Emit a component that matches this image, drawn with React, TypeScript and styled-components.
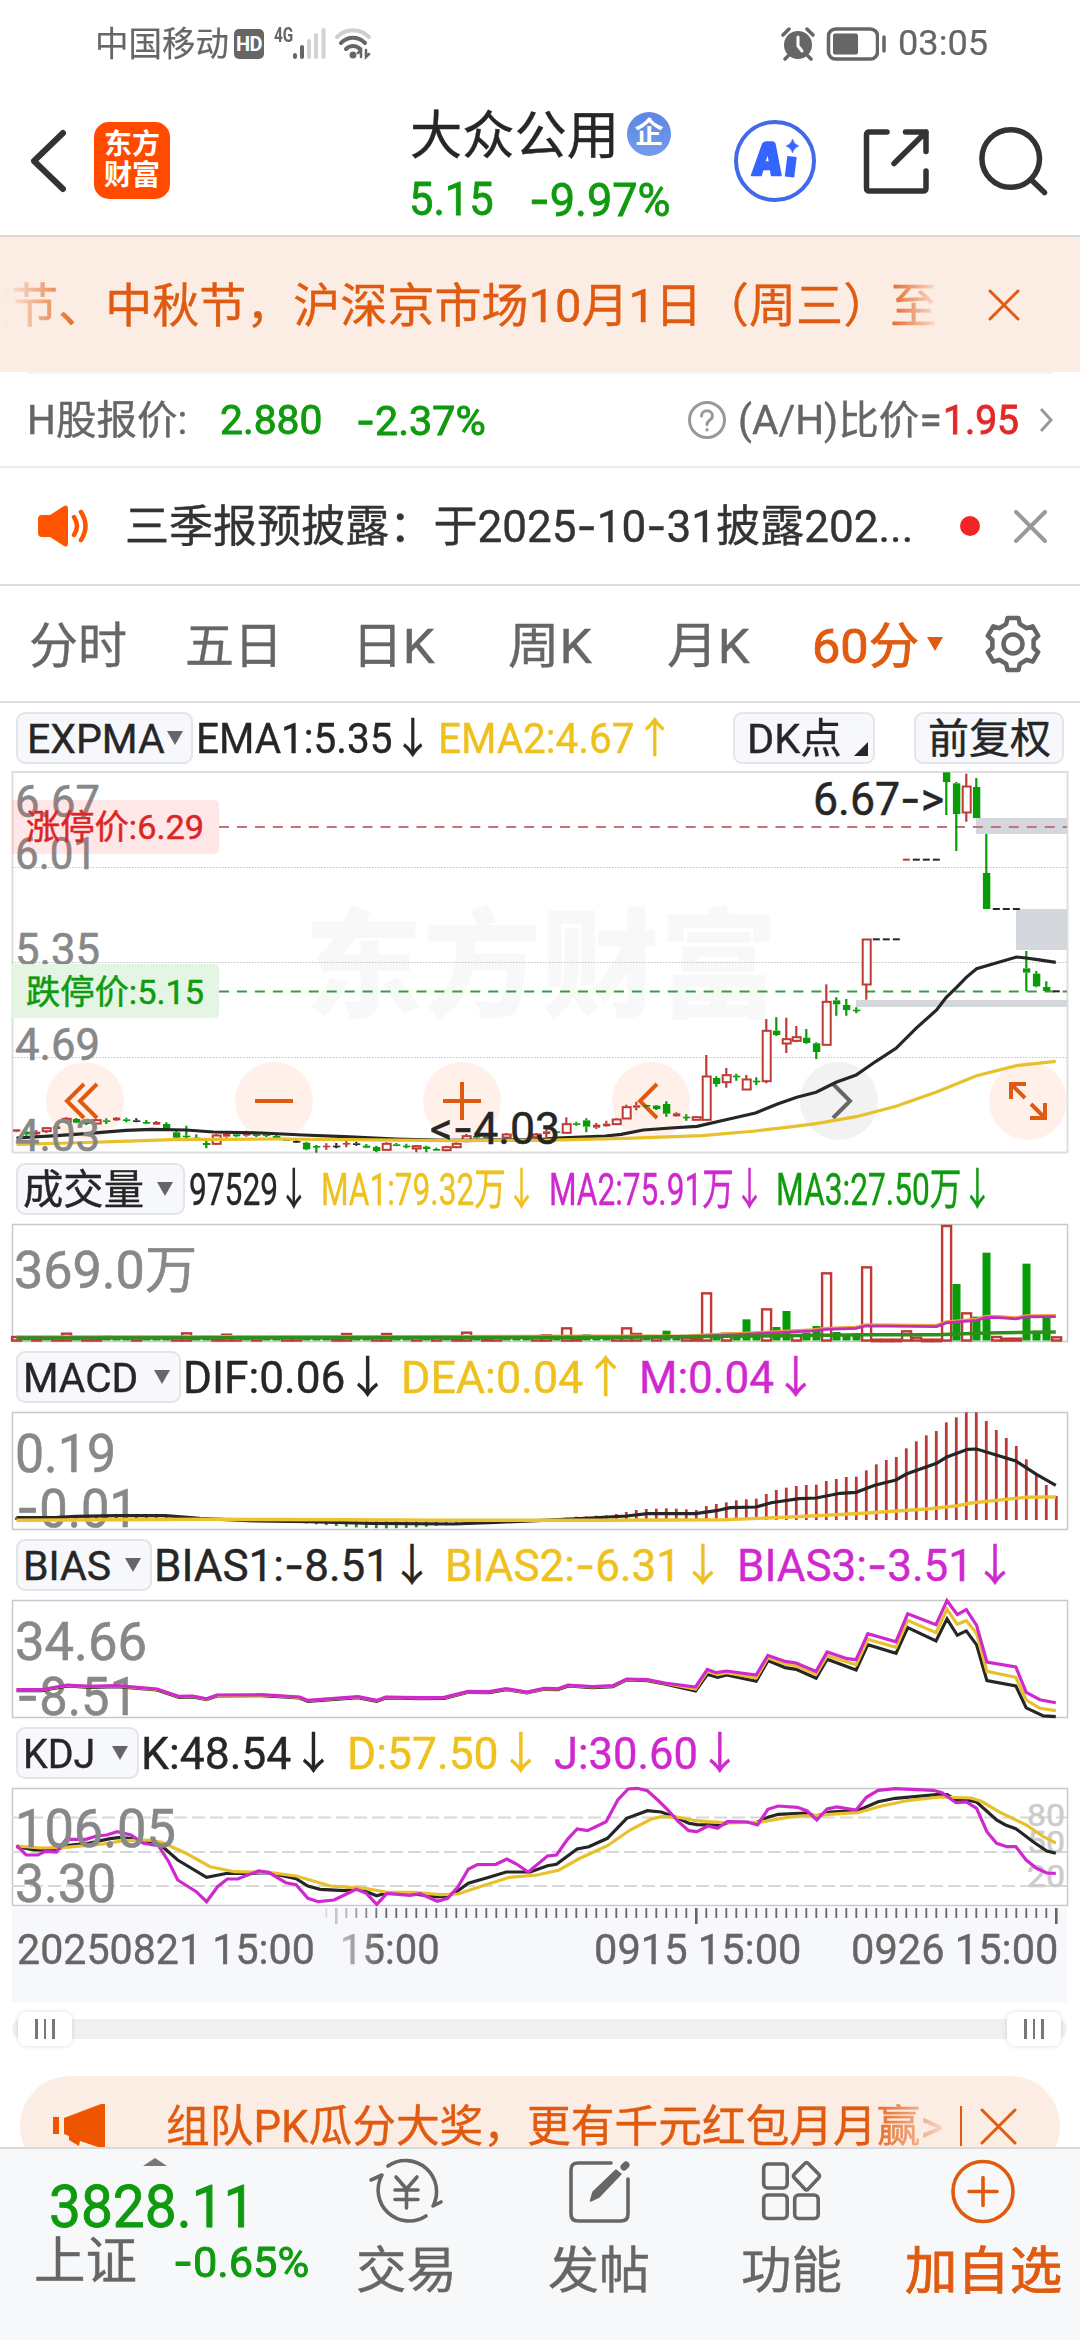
import React, { useLayoutEffect, useRef, useState } from "react";
import styled, { createGlobalStyle } from "styled-components";

const ORANGE = "#e05a10";
const GREEN = "#0f9a0f";
const RED = "#e02a2a";
const INK = "#262626";
const GREY = "#666666";
const YELLOW = "#efc11f";
const PINK = "#cf28cf";
const UP = "#c03a35";
const DOWN = "#089c08";

const Global = createGlobalStyle`
  * { box-sizing: border-box; }
  body { margin: 0; background: #fff; }
  svg { display: block; flex: none; }
`;

const Screen = styled.div`
  width: 1080px;
  height: 2340px;
  overflow: hidden;
  display: flex;
  flex-direction: column;
  background: #fff;
  color: ${INK};
  font-family: Roboto, "Noto Sans CJK SC", sans-serif;
`;

/* ---------- text that is fitted to a given advance width ---------- */

const FitBox = styled.span<{ $w: number; $ml: number; $size: number; $color?: string; $weight?: number; $dy: number; $ink: number }>`
  display: block;
  flex: none;
  width: ${(p) => p.$w}px;
  margin-left: ${(p) => p.$ml}px;
  margin-top: ${(p) => p.$dy}px;
  font-size: ${(p) => p.$size}px;
  line-height: ${(p) => Math.round(p.$size * 1.2)}px;
  font-weight: ${(p) => p.$weight ?? 400};
  -webkit-text-stroke: ${(p) => p.$ink}px currentColor;
  color: ${(p) => p.$color ?? "inherit"};
  white-space: nowrap;
`;
const FitInner = styled.span`
  display: inline-block;
  transform-origin: 0 50%;
`;
const Dash = styled.span`
  font-family: Inter, sans-serif;
`;

function dashed(text: string) {
  return text.split("-").map((part, i) => (
    <React.Fragment key={i}>
      {i > 0 && <Dash>-</Dash>}
      {part}
    </React.Fragment>
  ));
}

type FitProps = { w: number; ml?: number; size: number; color?: string; weight?: number; dy?: number; ink?: number; children: string };

function Fit({ w, ml = 0, size, color, weight, dy = 0, ink = 0.4, children }: FitProps) {
  const ref = useRef<HTMLSpanElement>(null);
  const [scale, setScale] = useState(1);
  useLayoutEffect(() => {
    if (ref.current) setScale(w / ref.current.offsetWidth);
  }, [w, children]);
  return (
    <FitBox $w={w} $ml={ml} $size={size} $color={color} $weight={weight} $dy={dy} $ink={ink}>
      <FitInner ref={ref} style={{ transform: `scaleX(${scale})` }}>
        {dashed(children)}
      </FitInner>
    </FitBox>
  );
}

/* ---------- status bar ---------- */

const StatusBar = styled.div`
  height: 86px;
  padding-top: 2px;
  flex: none;
  display: flex;
  align-items: center;
  color: ${GREY};
`;
const HdBadge = styled.span`
  width: 30px;
  height: 30px;
  margin-left: 5px;
  border-radius: 5px;
  background: ${GREY};
  color: #fff;
  font-size: 20px;
  font-weight: 700;
  line-height: 30px;
  text-align: center;
  letter-spacing: -0.5px;
`;
const Spacer = styled.div`
  flex: 1;
`;
const StatusEnd = styled.div`
  width: 92px;
`;

function Status() {
  return (
    <StatusBar>
      <Fit w={134} ml={95} size={34} ink={0.2}>中国移动</Fit>
      <HdBadge>HD</HdBadge>
      <Fit w={19} ml={10} size={21} weight={700} dy={-18} ink={0}>4G</Fit>
      <svg width="40" height="32" viewBox="0 0 40 32">
        <g strokeWidth="4" strokeLinecap="round">
          <path d="M2 27v2M9 19v10" stroke={GREY} />
          <path d="M16 13v16M23 7v22M30.500 2v27" stroke="#d2d2d2" />
        </g>
      </svg>
      <svg width="40" height="32" viewBox="0 0 40 32" fill="none" strokeLinecap="round">
        <path d="M4 9c9-9 23-9 32 0" stroke="#cfcfcf" strokeWidth="4" />
        <path d="M8 15c7-7 17-7 24 0" stroke={GREY} strokeWidth="4" />
        <path d="M13 21c4-4 10-4 14 0" stroke={GREY} strokeWidth="4" />
        <circle cx="20" cy="27" r="3.500" fill={GREY} />
        <path d="M28 29v-7l-3 3M33 22v7l3-3" stroke={GREY} strokeWidth="2.500" />
      </svg>
      <Spacer />
      <svg width="34" height="34" viewBox="0 0 34 34">
        <circle cx="17" cy="18" r="14" fill={GREY} />
        <path d="M2 8l6-6M32 8l-6-6M7 29l-3 3M27 29l3 3" stroke={GREY} strokeWidth="3.500" strokeLinecap="round" />
        <path d="M17 10v9l4 5" stroke="#fff" strokeWidth="3" fill="none" strokeLinecap="round" />
      </svg>
      <svg width="64" height="34" viewBox="0 0 64 34">
        <rect x="13.500" y="2" width="49" height="30" rx="7" fill="none" stroke={GREY} strokeWidth="3.500" />
        <rect x="18" y="6.500" width="25" height="21" rx="2" fill={GREY} />
      </svg>
      <svg width="8" height="34" viewBox="0 0 8 34">
        <path d="M5 10v14" stroke={GREY} strokeWidth="3.500" strokeLinecap="round" />
      </svg>
      <Fit w={90} ml={11} size={35} ink={0.2}>03:05</Fit>
      <StatusEnd />
    </StatusBar>
  );
}

/* ---------- title bar ---------- */

const TitleBar = styled.header`
  height: 151px;
  flex: none;
  display: flex;
  align-items: center;
  border-bottom: 2px solid #dcd8d6;
`;
const Logo = styled.div`
  width: 76px;
  height: 77px;
  margin-left: 28px;
  padding: 9px 0 6px;
  border-radius: 15px;
  background: #ff4a00;
  color: #fff;
  display: flex;
  flex-direction: column;
  justify-content: space-between;
`;
const Names = styled.div`
  width: 272px;
  height: 130px;
  margin-left: 239px;
  padding-top: 5px;
  display: flex;
  flex-direction: column;
  justify-content: space-between;
`;
const NameLine = styled.div`
  display: flex;
  align-items: center;
`;
const Corp = styled.span`
  width: 44px;
  height: 44px;
  margin-left: 8px;
  border-radius: 50%;
  background: linear-gradient(#5c86e2, #739cec);
  color: #fff;
  font-size: 29px;
  font-weight: 700;
  line-height: 42px;
  text-align: center;
`;
const TitleIcons = styled.div`
  display: flex;
  align-items: center;
  margin-left: 53px;
`;
const AiBadge = styled.div`
  width: 82px;
  height: 82px;
  border: 4.5px solid #4169e8;
  border-radius: 50%;
  display: flex;
  align-items: center;
  justify-content: center;
`;

function Title() {
  return (
    <TitleBar>
      <svg width="66" height="70" viewBox="0 0 66 70" fill="none" stroke="#333" strokeWidth="6" strokeLinecap="round" strokeLinejoin="round">
        <path d="M63 7L34 35l29 28" />
      </svg>
      <Logo>
        <Fit w={56} ml={10} size={28} weight={700} dy={-3} ink={0}>东方</Fit>
        <Fit w={56} ml={10} size={28} weight={700} dy={-3} ink={0}>财富</Fit>
      </Logo>
      <Names>
        <NameLine>
          <Fit w={209} ml={1} size={52} dy={5}>大众公用</Fit>
          <Corp>企</Corp>
        </NameLine>
        <NameLine>
          <Fit w={85} size={46} color={GREEN} ink={0.8} dy={4}>5.15</Fit>
          <Fit w={142} ml={35} size={46} color={GREEN} ink={0.8} dy={4}>-9.97%</Fit>
        </NameLine>
      </Names>
      <TitleIcons>
        <AiBadge>
          <svg width="52" height="44" viewBox="0 0 52 44" fill="none" stroke="#3565ff" strokeLinejoin="round">
            <path d="M2.500 36.500L13.500 5.500q1-2.500 3.500-2.500h6q2.500 0 3 2.500l6 31h-9.500l-1-6h-7.500l-2 6zM15.500 23h5l-1.500-9z" fill="#3565ff" fillRule="evenodd" strokeWidth="1.500" />
            <path d="M43 17.500L40.500 38" strokeWidth="9.500" />
            <path d="M43.500 0q1.500 5.500 6.500 7q-5 1.500-6.500 7q-1.500-5.500-6.500-7q5-1.500 6.500-7z" fill="#3565ff" strokeWidth="0.500" />
          </svg>
        </AiBadge>
        <svg width="158" height="80" viewBox="0 0 158 80" fill="none" stroke="#333" strokeWidth="5.500" strokeLinecap="round" strokeLinejoin="round">
          <path d="M71 11H53.500q-3 0-3 3v53q0 3 3 3H107q3 0 3-3V50M89.500 11H110v19.500M110 11L78 42.500" />
        </svg>
        <svg width="80" height="80" viewBox="0 0 80 80" fill="none" stroke="#333" strokeWidth="5.500" strokeLinecap="round">
          <circle cx="36.700" cy="37.500" r="28.800" />
          <path d="M57.500 59l13 12.500" />
        </svg>
      </TitleIcons>
    </TitleBar>
  );
}

/* ---------- notices ---------- */

const Banner = styled.div`
  height: 135px;
  flex: none;
  display: flex;
  align-items: center;
  background: #fcede4;
`;
const Marquee = styled.div`
  width: 938px;
  margin-right: 50px;
  overflow: hidden;
  display: flex;
  mask-image: linear-gradient(90deg, transparent 4px, #000 85px, #000 885px, transparent 942px);
`;
const HairLine = styled.div`
  height: 2px;
  flex: none;
  margin: 0 27px;
  background: #f9f3f1;
`;
const HRow = styled.div`
  height: 94px;
  flex: none;
  display: flex;
  align-items: center;
  color: ${GREY};
  border-bottom: 2px solid #ececec;
`;
const NoticeRow = styled.div`
  height: 118px;
  flex: none;
  display: flex;
  align-items: center;
  color: #333;
  border-bottom: 2px solid #dcdcdc;
`;
const RedDot = styled.span`
  width: 20px;
  height: 20px;
  margin: 0 34px 0 47px;
  border-radius: 50%;
  background: #f52424;
`;

function Cross({ size, color, width }: { size: number; color: string; width: number }) {
  return (
    <svg width={size} height={size} viewBox={`0 0 ${size} ${size}`} stroke={color} strokeWidth={width} strokeLinecap="round">
      <path d={`M2 2L${size - 2} ${size - 2}M${size - 2} 2L2 ${size - 2}`} />
    </svg>
  );
}

function Notices() {
  return (
    <>
      <Banner>
        <Marquee>
          <Fit w={973} ml={-36} size={47} color={ORANGE} dy={2}>庆节、中秋节，沪深京市场10月1日（周三）至</Fit>
        </Marquee>
        <Cross size={32} color={ORANGE} width={3} />
      </Banner>
      <HairLine />
      <HRow>
        <Fit w={160} ml={27} size={40} dy={2}>H股报价:</Fit>
        <Fit w={102} ml={33} size={40} color={GREEN} ink={0.9} dy={2}>2.880</Fit>
        <Fit w={130} ml={34} size={40} color={GREEN} ink={0.9} dy={2}>-2.37%</Fit>
        <Spacer />
        <svg width="40" height="40" viewBox="0 0 40 40" fill="none" stroke="#999" strokeWidth="3" strokeLinecap="round">
          <circle cx="20" cy="20" r="17.500" />
          <path d="M14.500 16c0-7 11-7 11 0c0 4-5.500 4-5.500 8.500M20 29.500v.5" />
        </svg>
        <Fit w={204} ml={11} size={40} dy={2}>(A/H)比价=</Fit>
        <Fit w={76} ml={1} size={40} color={RED} ink={0.9} dy={2}>1.95</Fit>
        <svg width="61" height="30" viewBox="0 0 61 30" fill="none" stroke="#999" strokeWidth="3">
          <path d="M22 4l10 11l-10 11" />
        </svg>
      </HRow>
      <NoticeRow>
        <svg width="90" height="44" viewBox="0 0 90 44">
          <path d="M38 15q0-4 4-4h8L64 2q4-2 4 3v34q0 5-4 3L50 33h-8q-4 0-4-4z" fill="#ff5500" />
          <path d="M74 13q6 9 0 18M81 8q9 14 0 28" fill="none" stroke="#ff5500" strokeWidth="4.500" strokeLinecap="round" />
        </svg>
        <Fit w={788} ml={35} size={44} dy={2}>三季报预披露：于2025-10-31披露202...</Fit>
        <RedDot />
        <Cross size={33} color="#999" width={4} />
      </NoticeRow>
    </>
  );
}

/* ---------- period tabs ---------- */

const Tabs = styled.nav`
  height: 117px;
  flex: none;
  display: flex;
  align-items: center;
  color: ${GREY};
  border-bottom: 2px solid #dcdcdc;
`;
const DownMark = styled.i<{ $w: number; $h: number; $color: string; $ml: number }>`
  flex: none;
  margin-left: ${(p) => p.$ml}px;
  border-left: ${(p) => p.$w / 2}px solid transparent;
  border-right: ${(p) => p.$w / 2}px solid transparent;
  border-top: ${(p) => p.$h}px solid ${(p) => p.$color};
`;
const GearWrap = styled.div`
  margin-left: 39px;
`;

const gear = (() => {
  const pts: string[] = [];
  for (let k = 0; k < 6; k++) {
    const base = (k * 60 - 90) * (Math.PI / 180);
    const at = (deg: number, r: number) => {
      const a = base + (deg * Math.PI) / 180;
      return `${(31 + r * Math.cos(a)).toFixed(1)} ${(31 + r * Math.sin(a)).toFixed(1)}`;
    };
    pts.push(at(-12, 26.5), at(12, 26.5), at(19, 21), at(41, 21));
  }
  return `M${pts.join("L")}Z`;
})();

function PeriodTabs() {
  return (
    <Tabs>
      <Fit w={98} ml={29} size={49} dy={6}>分时</Fit>
      <Fit w={98} ml={58} size={49} dy={6}>五日</Fit>
      <Fit w={83} ml={69} size={49} dy={6}>日K</Fit>
      <Fit w={84} ml={73} size={49} dy={6}>周K</Fit>
      <Fit w={83} ml={75} size={49} dy={6}>月K</Fit>
      <Fit w={107} ml={62} size={49} color={ORANGE} ink={0.9} dy={6}>60分</Fit>
      <DownMark $w={17} $h={14} $color={ORANGE} $ml={8} />
      <GearWrap>
        <svg width="62" height="62" viewBox="0 0 62 62" fill="none" stroke={GREY} strokeWidth="4.500" strokeLinejoin="round">
          <path d={gear} />
          <circle cx="31" cy="31" r="9.500" />
        </svg>
      </GearWrap>
    </Tabs>
  );
}

/* ---------- indicator headers ---------- */

const IndicatorRow = styled.div<{ $h: number; $pad: number }>`
  height: ${(p) => p.$h}px;
  flex: none;
  display: flex;
  align-items: flex-start;
  padding: ${(p) => p.$pad}px 0 0 16px;
`;
const Chip = styled.div<{ $w: number; $ml?: number }>`
  width: ${(p) => p.$w}px;
  height: 52px;
  flex: none;
  margin-left: ${(p) => p.$ml ?? 0}px;
  display: flex;
  align-items: center;
  border: 2px solid #e3e5ea;
  border-radius: 9px;
  background: #f6f8fb;
`;
const Values = styled.div`
  height: 52px;
  display: flex;
  align-items: center;
`;
const Corner = styled.i`
  align-self: flex-end;
  margin: 0 0 6px 12px;
  border-bottom: 14px solid ${INK};
  border-left: 14px solid transparent;
`;

type Value = { text: string; w: number; ml: number; color?: string };

function Header({ chip, chipW, chipText, markGap, values }: {
  chip: string; chipW: number; chipText: number; markGap: number; values: Value[];
}) {
  return (
    <IndicatorRow $h={70} $pad={9}>
      <Chip $w={chipW}>
        <Fit w={chipText} ml={5} size={41} dy={2}>{chip}</Fit>
        <DownMark $w={17} $h={14} $color={GREY} $ml={markGap} />
      </Chip>
      <Values>
        {values.map((v) => (
          <Fit key={v.text} w={v.w} ml={v.ml} size={44} color={v.color} dy={2}>{v.text}</Fit>
        ))}
      </Values>
    </IndicatorRow>
  );
}

/* ---------- chart geometry ---------- */

// Traces are kept on a fine grid: 1.452 units per pixel across, 3 per pixel down.
function trace(points: string, offset: number) {
  const d = points.trim().split(/\s+/).map((p) => {
    const [x, y] = p.split(",").map(Number);
    return `${(x / 1.452).toFixed(1)} ${(y / 3 - offset).toFixed(1)}`;
  });
  return `M${d.join("L")}`;
}
const barX = (i: number) => 16.3 + 10 * i;

// index, colour, high, body top, body bottom, low
const candles: [number, string, number, number, number, number][] = [
  [0, "r", 1110, 1111, 1118, 1120], [1, "g", 1115, 1118, 1126, 1130], [2, "r", 1113, 1118, 1126, 1130],
  [3, "r", 1104, 1106, 1118, 1122], [4, "r", 1098, 1102, 1110, 1112], [5, "r", 1075, 1078, 1090, 1095],
  [6, "g", 1077, 1080, 1091, 1093], [7, "g", 1082, 1086, 1095, 1098], [8, "r", 1080, 1082, 1095, 1095],
  [9, "g", 1078, 1084, 1087, 1095], [10, "r", 1074, 1076, 1084, 1086], [11, "g", 1076, 1081, 1085, 1090],
  [12, "k", 1078, 1084, 1087, 1090], [13, "g", 1083, 1089, 1093, 1095], [14, "r", 1086, 1089, 1097, 1098],
  [15, "g", 1090, 1095, 1109, 1110], [16, "g", 1115, 1120, 1136, 1138], [17, "g", 1100, 1130, 1133, 1138],
  [18, "g", 1126, 1136, 1139, 1145], [19, "g", 1145, 1152, 1158, 1168], [20, "r", 1125, 1128, 1156, 1158],
  [21, "r", 1122, 1125, 1133, 1136], [22, "g", 1122, 1126, 1132, 1135], [23, "r", 1115, 1123, 1130, 1133],
  [24, "g", 1120, 1126, 1129, 1134], [25, "g", 1122, 1126, 1130, 1134], [26, "g", 1126, 1131, 1139, 1141],
  [27, "g", 1138, 1141, 1143, 1145], [28, "k", 1143, 1146, 1148, 1152], [29, "g", 1148, 1151, 1171, 1174],
  [30, "g", 1158, 1161, 1164, 1181], [31, "r", 1153, 1160, 1163, 1172], [32, "k", 1152, 1160, 1163, 1168],
  [33, "r", 1145, 1152, 1155, 1165], [34, "k", 1148, 1153, 1156, 1160], [35, "g", 1155, 1160, 1166, 1168],
  [36, "g", 1160, 1164, 1176, 1180], [37, "r", 1150, 1153, 1174, 1174], [38, "g", 1152, 1156, 1160, 1162],
  [39, "g", 1154, 1160, 1163, 1168], [40, "r", 1158, 1160, 1170, 1180], [41, "g", 1160, 1163, 1170, 1180],
  [42, "g", 1166, 1170, 1172, 1174], [43, "r", 1160, 1163, 1175, 1177], [44, "r", 1150, 1153, 1166, 1168],
  [45, "r", 1125, 1130, 1148, 1150], [46, "g", 1125, 1131, 1134, 1138], [47, "g", 1127, 1132, 1135, 1138],
  [49, "r", 1122, 1125, 1137, 1140], [52, "r", 1122, 1125, 1136, 1138], [53, "r", 1110, 1117, 1125, 1135],
  [54, "g", 1115, 1117, 1120, 1122], [55, "r", 1075, 1094, 1123, 1123], [56, "g", 1088, 1093, 1095, 1100],
  [57, "g", 1078, 1084, 1103, 1120], [58, "r", 1092, 1097, 1106, 1110], [59, "r", 1085, 1094, 1102, 1103],
  [60, "r", 1078, 1080, 1097, 1097], [61, "r", 1037, 1043, 1080, 1080], [62, "r", 1028, 1039, 1046, 1054],
  [63, "g", 1037, 1038, 1043, 1047], [64, "g", 1038, 1040, 1050, 1053], [65, "g", 1027, 1035, 1064, 1073],
  [66, "r", 1060, 1063, 1072, 1073], [67, "g", 1066, 1073, 1077, 1085], [68, "r", 1072, 1073, 1084, 1084],
  [69, "r", 888, 951, 1084, 1084], [70, "g", 952, 957, 975, 983], [71, "r", 927, 947, 971, 986],
  [72, "g", 944, 950, 955, 965], [73, "r", 948, 960, 993, 993], [74, "g", 955, 965, 968, 978],
  [75, "r", 780, 814, 968, 973], [76, "g", 775, 815, 828, 831], [77, "r", 776, 839, 855, 882],
  [78, "r", 801, 833, 847, 850], [79, "g", 810, 836, 852, 854], [80, "g", 850, 853, 879, 900],
  [81, "r", 676, 727, 859, 859], [82, "g", 715, 724, 736, 770], [83, "g", 720, 738, 753, 770],
  [84, "g", 745, 752, 756, 763], [85, "r", 540, 540, 678, 722], [93, "g", 40, 40, 69, 168],
  [94, "g", 69, 73, 165, 276], [95, "r", 44, 81, 162, 188], [96, "g", 57, 84, 177, 177],
  [97, "g", 225, 342, 450, 450], [101, "g", 576, 628, 641, 697], [102, "g", 636, 644, 682, 685],
  [103, "g", 667, 684, 696, 697],
];
const flats: [number, string, number][] = [
  [86, INK, 541], [87, INK, 541], [88, INK, 541], [89, UP, 302], [90, INK, 302], [91, INK, 302], [92, INK, 302],
  [98, INK, 450], [99, INK, 450], [100, INK, 450], [104, INK, 697],
];

const ema1 = "24,1137 82,1130 125,1124 183,1114 220,1111 270,1113 310,1119 380,1122 440,1128 500,1133 575,1140 650,1144 783,1142 808,1137 879,1131 902,1126 934,1113 974,1107 1012,1102 1054,1082 1097,1062 1129,1035 1157,1015 1185,1000 1214,970 1243,948 1272,907 1301,868 1330,808 1360,753 1374,715 1389,685 1403,655 1418,629 1476,594 1490,597 1504,601 1533,610";
const ema2 = "24,1156 100,1152 175,1147 250,1142 325,1141 400,1140 500,1142 650,1145 783,1144 909,1138 1019,1130 1097,1116 1154,1102 1185,1094 1243,1073 1301,1042 1360,999 1418,950 1476,920 1533,907";

/* ---------- main chart ---------- */

const ChartBox = styled.div`
  position: relative;
  height: 382px;
  flex: none;
`;
const ChartSvg = styled.svg`
  position: relative;
  z-index: 1;
  overflow: visible;
  font-family: Roboto, "Noto Sans CJK SC", sans-serif;
`;
const Controls = styled.div`
  position: absolute;
  left: 46px;
  right: 13px;
  bottom: 14px;
  display: flex;
  justify-content: space-between;
`;
const RoundButton = styled.button<{ $off?: boolean }>`
  width: 78px;
  height: 78px;
  padding: 0;
  border: 0;
  border-radius: 50%;
  background: ${(p) => (p.$off ? "#f2f2f2" : "#fff1e9")};
  color: ${(p) => (p.$off ? GREY : ORANGE)};
`;

const controls: [string, string][] = [
  ["back-fast", "M38 22L21 39l17 17M51 22L34 39l17 17"],
  ["zoom-out", "M20 39h38"],
  ["zoom-in", "M20 39h38M39 20v38"],
  ["back", "M45 22L28 39l17 17"],
  ["forward", "M33 22l17 17L33 56"],
  ["expand", "M37 22H22v15M22 22l14 14M42 42l14 14M56 41v15H41"],
];

function Grey({ x, y, w, size, children, color = "#888" }: { x: number; y: number; w: number; size: number; children: string; color?: string }) {
  return (
    <text x={x} y={y} fontSize={size} fill={color} stroke={color} strokeWidth="0.600" textLength={w} lengthAdjust="spacingAndGlyphs">
      {children.startsWith("-") ? <><tspan fontFamily="Inter">-</tspan>{children.slice(1)}</> : children}
    </text>
  );
}

function MainChart() {
  const py = (v: number) => v / 3 - 13;
  return (
    <ChartBox>
      <Controls>
        {controls.map(([name, d]) => (
          <RoundButton key={name} $off={name === "forward"} aria-label={name}>
            <svg width="78" height="78" viewBox="0 0 78 78" fill="none" stroke="currentColor" strokeWidth="4">
              <path d={d} />
            </svg>
          </RoundButton>
        ))}
      </Controls>
      <ChartSvg width="1080" height="382" viewBox="0 0 1080 382">
        <text x="304" y="236" fontSize="118" fontWeight="900" fill="#000" fillOpacity="0.026" textLength="474" lengthAdjust="spacingAndGlyphs">东方财富</text>
        <rect x="12.500" y="0" width="1055" height="380.500" fill="none" stroke="#dedede" strokeWidth="2" />
        {[95.5, 190.5, 285.5].map((y) => (
          <path key={y} d={`M12 ${y}H1067`} stroke="#c4c4c4" strokeDasharray="1.500 1.500" />
        ))}
        <g fill="#d4d7dc">
          <rect x="976" y="46" width="91" height="16" />
          <rect x="1016" y="137" width="51" height="41" />
          <rect x="856" y="228" width="211" height="7" />
        </g>
        <Grey x={15} y={45} w={85} size={45}>6.67</Grey>
        <Grey x={15} y={96.5} w={82} size={45}>6.01</Grey>
        <Grey x={15} y={192.5} w={85} size={45}>5.35</Grey>
        <Grey x={15} y={287.5} w={85} size={45}>4.69</Grey>
        <path d="M12 28H214q5 0 5 5V77q0 5-5 5H12z" fill="rgba(255,70,70,0.13)" />
        <path d="M12 192H214q5 0 5 5V241q0 5-5 5H12z" fill="#e3f4e3" fillOpacity="0.95" />
        <text x="26" y="67" fontSize="34" fill="#dc2626" stroke="#dc2626" strokeWidth="0.500" textLength="178" lengthAdjust="spacingAndGlyphs">涨停价:6.29</text>
        <text x="26" y="232" fontSize="34" fill={GREEN} stroke={GREEN} strokeWidth="0.500" textLength="178" lengthAdjust="spacingAndGlyphs">跌停价:5.15</text>
        <path d="M219 55H1067" stroke="#c47474" strokeWidth="2" strokeDasharray="10 7.950" />
        <path d="M219 219.500H1067" stroke="#3f9a3f" strokeWidth="2" strokeDasharray="10 7.950" />
        {candles.map(([i, c, hi, top, bottom, lo]) => {
          const x = barX(i);
          const color = c === "r" ? UP : c === "g" ? DOWN : INK;
          const h = (bottom - top) / 3;
          const hollow = c === "r" && h > 3;
          return (
            <g key={i}>
              <path d={`M${x} ${py(hi)}V${py(top)}M${x} ${py(bottom)}V${py(lo)}`} stroke={color} strokeWidth="2.200" />
              {hollow ? (
                <rect x={x - 3.6} y={py(top) + 0.5} width="8" height={Math.max(h - 1, 2)} fill="#fff" stroke={color} strokeWidth="2" />
              ) : (
                <rect x={x - 3.4} y={py(top)} width="7.400" height={Math.max(h, 1.6)} fill={color} />
              )}
            </g>
          );
        })}
        {flats.map(([i, color, y]) => (
          <rect key={i} x={barX(i) - 3.5} y={py(y) - 1} width="7" height="2" fill={color} />
        ))}
        <path d={trace(ema1, 13)} fill="none" stroke={INK} strokeWidth="3.200" />
        <path d={trace(ema2, 13)} fill="none" stroke="#e8c02c" strokeWidth="3.200" />
        <Grey x={15} y={378.5} w={85} size={45}>4.03</Grey>
        <text x="813" y="43" fontSize="46" fill={INK} stroke={INK} strokeWidth="0.500" textLength="131" lengthAdjust="spacingAndGlyphs">
          6.67<tspan fontFamily="Inter">-</tspan>&gt;
        </text>
        <text x="430" y="372" fontSize="45" fill={INK} stroke={INK} strokeWidth="0.500" textLength="130" lengthAdjust="spacingAndGlyphs">
          &lt;<tspan fontFamily="Inter">-</tspan>4.03
        </text>
      </ChartSvg>
    </ChartBox>
  );
}

/* ---------- sub panels ---------- */

const PanelSvg = styled.svg`
  overflow: visible;
  font-family: Roboto, "Noto Sans CJK SC", sans-serif;
`;

function Panel({ children }: { children: React.ReactNode }) {
  return (
    <PanelSvg width="1080" height="118" viewBox="0 0 1080 118">
      <rect x="12.500" y="0.500" width="1055" height="117" fill="none" stroke="#c8c8c8" strokeWidth="1.500" />
      {children}
    </PanelSvg>
  );
}

const volumes: Record<number, [string, number]> = {
  5: ["r", 548], 9: ["g", 556], 17: ["r", 547], 21: ["r", 551], 33: ["r", 549], 37: ["r", 549], 45: ["r", 545],
  53: ["r", 553], 55: ["r", 532], 57: ["g", 553], 61: ["r", 532], 62: ["r", 549], 65: ["g", 542], 69: ["r", 427],
  71: ["r", 548], 72: ["g", 552], 73: ["g", 508], 74: ["g", 552], 75: ["r", 475], 76: ["g", 531], 77: ["g", 483],
  78: ["r", 552], 79: ["g", 548], 80: ["g", 528], 81: ["r", 367], 82: ["g", 546], 83: ["g", 558], 84: ["g", 550],
  85: ["r", 349], 86: ["r", 566], 87: ["r", 566], 88: ["r", 566], 89: ["r", 541], 90: ["r", 560], 91: ["r", 566],
  92: ["r", 566], 93: ["r", 225], 94: ["g", 402], 95: ["r", 487], 96: ["g", 500], 97: ["g", 308], 98: ["r", 558],
  99: ["r", 563], 100: ["r", 563], 101: ["g", 341], 102: ["g", 542], 103: ["g", 502], 104: ["r", 559],
};
const volumeMa = "24,562 600,561 1000,559 1060,553 1110,548 1180,541 1200,536 1243,533 1257,526 1360,528 1374,517 1418,509 1432,500 1450,501 1475,505 1490,499 1533,498";

function VolumePanel() {
  return (
    <Panel>
      <Grey x={14} y={64} w={183} size={51}>369.0万</Grey>
      {Array.from({ length: 105 }, (_, i) => {
        const [c, top] = volumes[i] ?? [i % 4 === 0 || i % 5 === 2 ? "r" : "g", 558 + (i % 3) * 2];
        const y = top / 3 - 74;
        return c === "r" ? (
          <rect key={i} x={barX(i) - 4.2} y={y + 1} width="9" height={Math.max(115.5 - y, 1.5)} fill="#fff" stroke={UP} strokeWidth="2.400" />
        ) : (
          <rect key={i} x={barX(i) - 3.8} y={y} width="8" height={116.5 - y} fill={DOWN} />
        );
      })}
      <path d={trace(volumeMa, 74.5)} fill="none" stroke="#f0a040" strokeWidth="3" />
      <path d={trace(volumeMa, 73.4)} fill="none" stroke="#c22fb4" strokeWidth="2.800" />
      <path d={trace("24,564 900,562 1100,558 1257,554 1360,554 1432,549 1533,546", 74)} fill="none" stroke="#2f8f1c" strokeWidth="3.400" />
    </Panel>
  );
}

const macdTail = [533, 530, 529, 527, 526, 522, 516, 510, 507, 506, 505, 506, 508, 510, 498, 492, 487, 481, 478, 476, 462, 450, 443, 438, 435, 434, 423, 417, 411, 410, 391, 373, 360, 351, 325, 304, 286, 273, 247, 232, 217, 217, 243, 270, 294, 318, 358, 402, 435, 468];
function macdAt(i: number) {
  if (i >= 55) return macdTail[i - 55];
  if (i <= 17) return 532 - 11 * Math.exp(-((i - 11) ** 2) / 16);
  if (i >= 20 && i <= 50) return 541 + 24 * Math.exp(-((i - 37) ** 2) / 70);
  return 538;
}

function MacdPanel() {
  return (
    <Panel>
      {Array.from({ length: 105 }, (_, i) => {
        const v = macdAt(i);
        return <path key={i} d={`M${barX(i)} 108V${v / 3 - 72}`} stroke={v < 540 ? UP : "#1f8f1f"} strokeWidth="2.800" />;
      })}
      <Grey x={15} y={60} w={101} size={54}>0.19</Grey>
      <Grey x={16} y={115} w={122} size={54}>-0.01</Grey>
      <path fill="none" stroke={INK} strokeWidth="3.200" d={trace("24,533 80,533 110,529 170,527 240,527 290,535 360,542 450,545 540,550 660,552 720,547 780,542 850,535 910,528 940,521 1010,521 1040,512 1060,503 1098,501 1120,488 1160,476 1185,474 1220,460 1243,457 1270,436 1301,420 1316,402 1360,370 1374,352 1405,328 1418,327 1475,363 1505,403 1533,436", 72)} />
      <path fill="none" stroke="#f0c030" strokeWidth="3.400" d={trace("24,541 300,538 500,539 650,541 800,541 870,541 1050,539 1140,532 1200,526 1260,519 1350,506 1390,497 1410,489 1490,472 1533,471", 72)} />
    </Panel>
  );
}

const biasHead = "24,480 60,480 98,466 130,470 170,468 228,478 260,500 280,499 300,507 315,496 380,495 435,502 447,512 520,501 547,512 560,502 610,504 645,503 680,485 710,486 735,477 765,487 790,476 810,477 825,466 860,471 890,468 910,448 940,450 965,460";

function BiasPanel() {
  return (
    <Panel>
      <Grey x={15} y={60} w={132} size={54}>34.66</Grey>
      <Grey x={16} y={115} w={122} size={54}>-8.51</Grey>
      <path fill="none" stroke={INK} strokeWidth="3.200" d={trace(`${biasHead} 1010,481 1027,431 1042,440 1055,433 1098,452 1115,390 1140,411 1156,416 1185,443 1201,386 1243,418 1260,342 1301,368 1318,291 1359,331 1375,265 1390,314 1403,301 1418,343 1433,450 1475,466 1490,532 1515,556 1533,558`, 69.4)} />
      <path fill="none" stroke="#e8c02c" strokeWidth="3.200" d={trace(`${biasHead} 1010,477 1027,424 1042,434 1055,428 1098,444 1115,383 1140,402 1156,407 1185,433 1201,377 1243,404 1260,328 1301,352 1318,271 1359,308 1375,238 1390,283 1403,272 1418,310 1433,424 1475,442 1490,510 1510,535 1533,542`, 70)} />
      <path fill="none" stroke={PINK} strokeWidth="3.200" d={trace(`${biasHead} 1010,472 1027,419 1040,429 1055,424 1098,436 1115,377 1140,395 1156,400 1185,425 1201,367 1230,387 1243,390 1260,312 1301,336 1318,252 1359,285 1375,213 1390,255 1403,240 1418,287 1433,397 1475,412 1490,488 1510,510 1533,519`, 70.3)} />
    </Panel>
  );
}

function KdjPanel() {
  return (
    <Panel>
      {[29.5, 64, 98].map((y) => (
        <path key={y} d={`M12 ${y}H1067`} stroke="#d8d8d8" strokeWidth="1.800" strokeDasharray="13 5" />
      ))}
      <Grey x={1027} y={37.5} w={38} size={32} color="#cccccc">80</Grey>
      <Grey x={1027} y={65} w={38} size={32} color="#cccccc">50</Grey>
      <Grey x={1027} y={99} w={38} size={32} color="#cccccc">20</Grey>
      <path fill="none" stroke={INK} strokeWidth="3.200" d={trace("24,380 50,390 80,390 100,376 130,369 160,356 175,352 190,356 215,364 235,378 258,420 300,472 330,460 360,460 390,458 430,476 447,498 465,508 500,512 520,505 547,527 560,520 600,522 635,531 650,528 665,512 680,490 710,472 735,456 770,456 795,437 808,433 838,387 855,380 882,355 910,295 940,272 960,276 985,295 1000,310 1012,314 1045,316 1060,306 1098,308 1115,292 1130,283 1170,279 1185,288 1205,276 1245,272 1275,245 1300,235 1360,224 1375,224 1390,242 1403,240 1418,246 1447,300 1460,315 1475,326 1500,365 1520,393 1533,400", 68)} />
      <path fill="none" stroke="#e8c02c" strokeWidth="3.200" d={trace("24,378 60,384 95,382 150,372 180,362 215,360 235,367 270,400 305,440 340,455 390,457 430,468 480,498 530,505 560,516 600,517 640,524 665,522 700,498 740,472 780,465 812,450 840,417 882,377 915,330 945,298 960,290 985,292 1010,302 1060,309 1105,306 1150,290 1180,287 1220,281 1245,278 1280,258 1320,241 1365,231 1410,234 1425,244 1450,275 1490,315 1515,350 1533,369", 68)} />
      <path fill="none" stroke={PINK} strokeWidth="3.200" d={trace("24,376 38,405 55,405 66,394 82,396 96,358 125,358 140,348 155,345 170,335 190,345 208,370 230,377 245,425 258,480 285,515 300,545 316,500 330,477 345,477 375,453 390,457 415,488 430,494 447,535 462,545 485,540 500,525 517,508 532,520 547,553 562,520 595,526 610,521 635,544 650,535 665,500 680,448 693,434 720,433 736,417 750,432 767,456 795,408 808,405 824,358 838,327 853,332 880,305 897,240 912,207 925,205 940,212 955,240 970,270 985,305 1000,332 1012,335 1028,318 1042,325 1056,305 1085,306 1100,315 1115,268 1130,258 1158,262 1172,273 1186,300 1201,267 1215,261 1243,270 1258,232 1275,211 1300,206 1355,211 1368,218 1388,248 1403,246 1418,265 1433,335 1447,370 1462,380 1475,380 1490,420 1505,445 1520,459 1533,460", 68)} />
      <Grey x={15} y={59} w={161} size={54}>106.05</Grey>
      <Grey x={15} y={114} w={101} size={54}>3.30</Grey>
    </Panel>
  );
}

/* ---------- time axis and range slider ---------- */

const Axis = styled.div`
  height: 94px;
  flex: none;
  margin: 2px 13px 0 12px;
  background: #f7f8fb;
  color: ${GREY};
`;
const AxisLabels = styled.div`
  display: flex;
`;
const FadeIn = styled.div`
  mask-image: linear-gradient(90deg, rgba(0, 0, 0, 0.3) 20px, #000 65px);
`;
const Range = styled.div`
  height: 20px;
  flex: none;
  margin: 17px 13px 0 12px;
  padding: 0 6px;
  border-radius: 10px;
  background: #f0f0f3;
  display: flex;
  justify-content: space-between;
  align-items: center;
`;
const Handle = styled.div`
  width: 54px;
  height: 34px;
  flex: none;
  border-radius: 8px;
  background: #fff;
  box-shadow: 0 0 5px rgba(0, 0, 0, 0.14);
  display: flex;
  justify-content: center;
  align-items: center;
  gap: 6px;
`;
const Grip = styled.i`
  width: 2.5px;
  height: 20px;
  background: #777;
`;

function TimeAxis() {
  return (
    <Axis>
      <svg width="1055" height="17" viewBox="12 0 1055 17">
        {Array.from({ length: 74 }, (_, k) => {
          const i = k + 31;
          const major = (i - 32) % 36 === 0;
          const opacity = Math.min(1, 0.2 + (i - 31) * 0.14);
          return <path key={i} d={`M${barX(i)} 0V${major ? 16 : 10}`} stroke={GREY} strokeWidth={major ? 2.6 : 1.8} opacity={opacity} />;
        })}
      </svg>
      <AxisLabels>
        <Fit w={298} ml={5} size={42}>20250821 15:00</Fit>
        <FadeIn>
          <Fit w={100} ml={25} size={42}>15:00</Fit>
        </FadeIn>
        <Fit w={207} ml={154} size={42}>0915 15:00</Fit>
        <Fit w={207} ml={50} size={42}>0926 15:00</Fit>
      </AxisLabels>
    </Axis>
  );
}

/* ---------- promo strip ---------- */

const PromoClip = styled.div`
  height: 71px;
  flex: none;
  margin-top: 37px;
  padding: 0 20px;
  overflow: hidden;
`;
const Promo = styled.div`
  height: 100px;
  border-radius: 50px;
  background: #fcede4;
  display: flex;
  align-items: center;
`;
const PromoText = styled.div`
  width: 779px;
  margin-left: 60px;
  mask-image: linear-gradient(90deg, #000 700px, rgba(0, 0, 0, 0.15) 779px);
`;
const PromoRule = styled.i`
  width: 2px;
  height: 40px;
  margin: 0 18px 0 15px;
  background: ${ORANGE};
`;

/* ---------- bottom bar ---------- */

const BottomBar = styled.footer`
  flex: 1;
  display: flex;
  background: #f7f8fa;
  border-top: 2px solid #d9dadc;
  color: ${GREY};
`;
const IndexBox = styled.div`
  width: 335px;
  flex: none;
  display: flex;
  flex-direction: column;
`;
const UpMark = styled.i`
  width: 24px;
  margin: 9px 0 0 143px;
  border-left: 12px solid transparent;
  border-right: 12px solid transparent;
  border-bottom: 8px solid #777;
`;
const IndexLine = styled.div`
  display: flex;
  align-items: center;
  height: 62px;
`;
const Action = styled.div<{ $w: number; $color?: string }>`
  width: ${(p) => p.$w}px;
  flex: none;
  padding-top: 6px;
  display: flex;
  flex-direction: column;
  align-items: center;
  gap: 14px;
  color: ${(p) => p.$color ?? GREY};
`;

const stroke = { fill: "none", stroke: "currentColor", strokeWidth: 3.6, strokeLinecap: "round" as const, strokeLinejoin: "round" as const };

function Bottom() {
  return (
    <BottomBar>
      <IndexBox>
        <UpMark />
        <IndexLine>
          <Fit w={207} ml={49} size={59} color={GREEN} dy={18} ink={0.9}>3828.11</Fit>
        </IndexLine>
        <IndexLine>
          <Fit w={103} ml={34} size={51} dy={4}>上证</Fit>
          <Fit w={136} ml={36} size={43} color={GREEN} ink={0.9} dy={4}>-0.65%</Fit>
        </IndexLine>
      </IndexBox>
      <Action $w={142}>
        <svg width="76" height="72" viewBox="0 0 76 72" {...stroke}>
          <path d="M20 11A31 31 0 0 1 65 51L73 47M58 61A31 31 0 0 1 14 20L3 25" />
          <path d="M28 22l10.500 12L49 22M38.500 34v19M27 35h23M27 44.500h23" />
        </svg>
        <Fit w={101} size={50}>交易</Fit>
      </Action>
      <Action $w={243}>
        <svg width="72" height="72" viewBox="0 0 72 72" {...stroke}>
          <path d="M48 8H15q-7 0-7 7v44q0 7 7 7h43q7 0 7-7V24" />
          <path d="M27.500 46l2.500-9L53 15l5 4L36 42z" fill="currentColor" strokeWidth="1.500" />
          <path d="M61 12l2-2" strokeWidth="7" />
        </svg>
        <Fit w={102} size={50}>发帖</Fit>
      </Action>
      <Action $w={142}>
        <svg width="72" height="72" viewBox="0 0 72 72" {...stroke}>
          <rect x="8.700" y="9" width="23.500" height="24" rx="4" />
          <rect x="8.700" y="40" width="23.500" height="23.500" rx="4" />
          <rect x="39.700" y="40" width="23.500" height="23.500" rx="4" />
          <path d="M49.800 8.500q1.700-2 3.400 0L63.500 19q2 2 0 4L53.200 34q-1.700 2-3.400 0L39.500 23q-2-2 0-4z" />
        </svg>
        <Fit w={101} size={50}>功能</Fit>
      </Action>
      <Action $w={242} $color={ORANGE}>
        <svg width="72" height="72" viewBox="0 0 72 72" {...stroke}>
          <circle cx="36" cy="36.500" r="30" />
          <path d="M22 36.500h28M36 22.500v28" />
        </svg>
        <Fit w={157} size={51} ink={0.9}>加自选</Fit>
      </Action>
    </BottomBar>
  );
}

export default function App() {
  return (
    <>
      <Global />
      <Screen>
        <Status />
        <Title />
        <Notices />
        <PeriodTabs />
        <IndicatorRow $h={69} $pad={9}>
          <Chip $w={177}>
            <Fit w={138} ml={9} size={41} dy={2}>EXPMA</Fit>
            <DownMark $w={17} $h={14} $color={GREY} $ml={2} />
          </Chip>
          <Values>
            <Fit w={237} ml={3} size={42} dy={2}>EMA1:5.35↓</Fit>
            <Fit w={237} ml={5} size={42} color={YELLOW} dy={2}>EMA2:4.67↑</Fit>
          </Values>
          <Chip $w={142} $ml={58}>
            <Fit w={95} ml={12} size={41} dy={2}>DK点</Fit>
            <Corner />
          </Chip>
          <Chip $w={150} $ml={39}>
            <Fit w={123} ml={12} size={41} dy={2}>前复权</Fit>
          </Chip>
        </IndicatorRow>
        <MainChart />
        <Header chip="成交量" chipW={169} chipText={121} markGap={13} values={[
          { text: "97529↓", w: 121, ml: 4 },
          { text: "MA1:79.32万↓", w: 216, ml: 11, color: YELLOW },
          { text: "MA2:75.91万↓", w: 216, ml: 12, color: PINK },
          { text: "MA3:27.50万↓", w: 217, ml: 11, color: GREEN },
        ]} />
        <VolumePanel />
        <Header chip="MACD" chipW={165} chipText={115} markGap={16} values={[
          { text: "DIF:0.06↓", w: 207, ml: 2 },
          { text: "DEA:0.04↑", w: 227, ml: 11, color: YELLOW },
          { text: "M:0.04↓", w: 179, ml: 11, color: PINK },
        ]} />
        <MacdPanel />
        <Header chip="BIAS" chipW={136} chipText={88} markGap={14} values={[
          { text: "BIAS1:-8.51↓", w: 280, ml: 2 },
          { text: "BIAS2:-6.31↓", w: 280, ml: 11, color: YELLOW },
          { text: "BIAS3:-3.51↓", w: 280, ml: 12, color: PINK },
        ]} />
        <BiasPanel />
        <Header chip="KDJ" chipW={123} chipText={72} markGap={17} values={[
          { text: "K:48.54↓", w: 195, ml: 2 },
          { text: "D:57.50↓", w: 196, ml: 11, color: YELLOW },
          { text: "J:30.60↓", w: 187, ml: 11, color: PINK },
        ]} />
        <KdjPanel />
        <TimeAxis />
        <Range>
          <Handle><Grip /><Grip /><Grip /></Handle>
          <Handle><Grip /><Grip /><Grip /></Handle>
        </Range>
        <PromoClip>
          <Promo>
            <svg width="86" height="46" viewBox="0 0 86 46">
              <path d="M33 14h6v17h-6zM44 15L81 1h4v44h-4L60 38l-1 5l-10-6v-4l-5-2z" fill="#ee5500" />
            </svg>
            <PromoText>
              <Fit w={777} size={44} color={ORANGE} dy={2}>{"组队PK瓜分大奖，更有千元红包月月赢>"}</Fit>
            </PromoText>
            <PromoRule />
            <Cross size={37} color={ORANGE} width={3} />
          </Promo>
        </PromoClip>
        <Bottom />
      </Screen>
    </>
  );
}
